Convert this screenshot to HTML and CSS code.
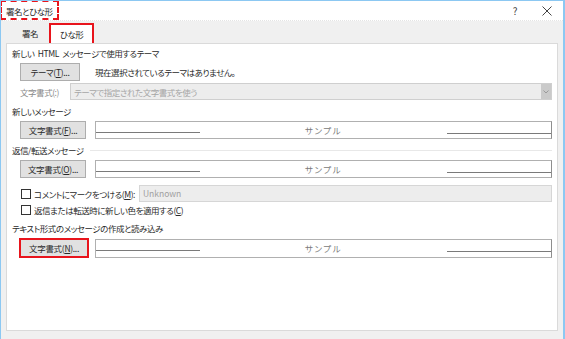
FILE: index.html
```html
<!DOCTYPE html>
<html lang="ja">
<head>
    <meta charset="UTF-8">
    <title>署名とひな形</title>
    <link rel="stylesheet" href="styles.css">
</head>
<body>
    <div class="window">
        <!-- Title bar -->
        <div class="titlebar">
            <span class="title">署名とひな形</span>
            <span class="help">?</span>
            <svg class="close" width="10" height="10" viewBox="0 0 10 10">
                <path d="M0.5 0.5 L9.5 9.5 M9.5 0.5 L0.5 9.5" stroke="#444" stroke-width="1" fill="none"/>
            </svg>
        </div>

        <!-- Tabs -->
        <div class="tabs">
            <div class="tab">署名</div>
            <div class="tab active">ひな形</div>
        </div>

        <div class="panel">
            <div class="group-label">新しい HTML メッセージで使用するテーマ</div>
            <div class="row">
                <button class="btn btn-theme">テーマ(<u>T</u>)...</button>
                <span class="note">現在選択されているテーマはありません。</span>
            </div>
            <div class="row row-combo">
                <span class="disabled-label">文字書式(:)</span>
                <div class="combo">
                    <span>テーマで指定された文字書式を使う</span>
                    <span class="combo-arrow">
                        <svg width="6" height="4" viewBox="0 0 6 4"><path d="M0.5 0.5 L3 3 L5.5 0.5" stroke="#9a9a9a" fill="none"/></svg>
                    </span>
                </div>
            </div>

            <div class="group-label">新しいメッセージ</div>
            <div class="row">
                <button class="btn">文字書式(<u>F</u>)...</button>
                <div class="sample"><span class="rule"></span><span class="sample-text">サンプル</span><span class="rule rule-right"></span></div>
            </div>

            <div class="group-label with-line"><span>返信/転送メッセージ</span></div>
            <div class="row">
                <button class="btn">文字書式(<u>O</u>)...</button>
                <div class="sample"><span class="rule"></span><span class="sample-text">サンプル</span><span class="rule rule-right"></span></div>
            </div>
            <div class="row row-check">
                <span class="checkbox"></span>
                <span class="check-label">コメントにマークをつける(<u>M</u>):</span>
                <div class="textbox">Unknown</div>
            </div>
            <div class="row row-check2">
                <span class="checkbox"></span>
                <span class="check-label">返信または転送時に新しい色を適用する(<u>C</u>)</span>
            </div>

            <div class="group-label">テキスト形式のメッセージの作成と読み込み</div>
            <div class="row row-last">
                <div class="highlight">
                    <button class="btn">文字書式(<u>N</u>)...</button>
                </div>
                <div class="sample"><span class="rule"></span><span class="sample-text">サンプル</span><span class="rule rule-right"></span></div>
            </div>
        </div>
    </div>
</body>
</html>
```

FILE: styles.css
```css
body {
    margin: 0;
    font-family: "Noto Sans CJK JP", "Noto Sans", sans-serif;
    font-feature-settings: "palt";
    font-size: 8.5px;
    letter-spacing: -0.45px;
    word-spacing: 2px;
    color: #2a2a2a;
    background-color: #f0f0f0;
}

.window {
    width: 565px;
    height: 339px;
    box-sizing: border-box;
    border-top: 1px solid #8cc8f2;
    border-left: 1px solid #8cc8f2;
    border-right: 2px solid #8cc8f2;
    background-color: #f0f0f0;
    display: flex;
    flex-direction: column;
    overflow: hidden;
}

.titlebar {
    height: 19px;
    background-color: #fff;
    display: flex;
    align-items: center;
    border-bottom: 1px dotted #e4e4e4;
}

.title {
    align-self: flex-start;
    height: 20px;
    line-height: 18px;
    margin-top: -1px;
    margin-left: -1px;
    padding: 0 4px 0 4px;
    border: 2px dashed #e8141c;
    box-sizing: border-box;
}

.help {
    margin-left: auto;
    margin-right: 25px;
    color: #444;
    font-size: 10px;
}

.close {
    margin-right: 11px;
}

.tabs {
    height: 22px;
    display: flex;
    align-items: flex-end;
    padding-left: 13px;
}

.tab {
    height: 20px;
    line-height: 20px;
    padding: 0 8px;
}

.tab.active {
    background-color: #fff;
    border: 2px solid #e8141c;
    border-bottom: none;
    line-height: 19px;
    width: 45px;
    box-sizing: border-box;
    padding: 0;
    text-align: center;
    margin-left: 3px;
}

.panel {
    flex: 1;
    margin: 0 5px 8px 5px;
    background-color: #fff;
    border: 1px solid #dadada;
    display: flex;
    flex-direction: column;
}

.group-label {
    height: 13px;
    line-height: 13px;
    margin: 3px 5px 0 5px;
    white-space: nowrap;
}

.group-label ~ .group-label {
    margin-top: 5px;
}

.with-line {
    display: flex;
    align-items: center;
    gap: 6px;
}

.with-line::after {
    content: "";
    flex: 1;
    border-top: 1px solid #e8e8e8;
}

.row {
    margin: 3px 5px 0 13px;
    display: flex;
    align-items: center;
    height: 18px;
    white-space: nowrap;
}

.group-label + .row {
    margin-top: 3px;
}

.row-combo {
    margin-top: 2px;
    height: 17px;
}

.row-check {
    margin-top: 7px;
    height: 17px;
}

.row-check2 {
    margin-top: 1px;
    height: 14px;
}

.row-last {
    margin-top: 2px;
    height: 20px;
}

.btn {
    width: 66px;
    height: 18px;
    padding: 0;
    margin: 0;
    font-family: inherit;
    font-feature-settings: "palt";
    font-size: 8.5px;
    letter-spacing: -0.3px;
    color: #2a2a2a;
    background-color: #e1e1e1;
    border: 1px solid #adadad;
    box-sizing: border-box;
}

.btn-theme {
    width: 60px;
}

.note {
    margin-left: 15px;
}

.disabled-label {
    color: #8a8a8a;
    width: 50px;
    flex: none;
}

.combo {
    flex: 1;
    height: 17px;
    box-sizing: border-box;
    border: 1px solid #cfcfcf;
    background-color: #ededed;
    color: #a6a6a6;
    display: flex;
    align-items: center;
    padding-left: 3px;
}

.combo-arrow {
    margin-left: auto;
    width: 10px;
    height: 15px;
    background-color: #cacaca;
    display: flex;
    align-items: center;
    justify-content: center;
}

.sample {
    flex: 1;
    margin-left: 9px;
    height: 18px;
    box-sizing: border-box;
    border: 1px solid #b0b0b0;
    border-right-color: #8e8e8e;
    display: flex;
    align-items: center;
}

.highlight + .sample {
    margin-left: 6px;
    height: 19px;
}

.rule {
    width: 104px;
    height: 10px;
    border-bottom: 1px solid #7a7a7a;
    align-self: flex-start;
}

.rule-right {
    margin-top: 1px;
}

.sample-text {
    flex: 1;
    text-align: center;
    color: #7a7a7a;
    letter-spacing: 1.5px;
}

.checkbox {
    width: 10px;
    height: 10px;
    flex: none;
    box-sizing: border-box;
    border: 1px solid #333;
    background-color: #fff;
    margin-left: 1px;
}

.check-label {
    margin-left: 3px;
}

.textbox {
    flex: 1;
    margin-left: 4px;
    height: 17px;
    box-sizing: border-box;
    border: 1px solid #d6d6d6;
    background-color: #ededed;
    color: #a0a0a0;
    padding-left: 3px;
    line-height: 15px;
    letter-spacing: 0;
}

.highlight {
    border: 2px solid #e8141c;
    margin-left: -1px;
    display: flex;
    height: 20px;
    box-sizing: border-box;
}

.highlight .btn {
    height: 16px;
    border: none;
}
```
